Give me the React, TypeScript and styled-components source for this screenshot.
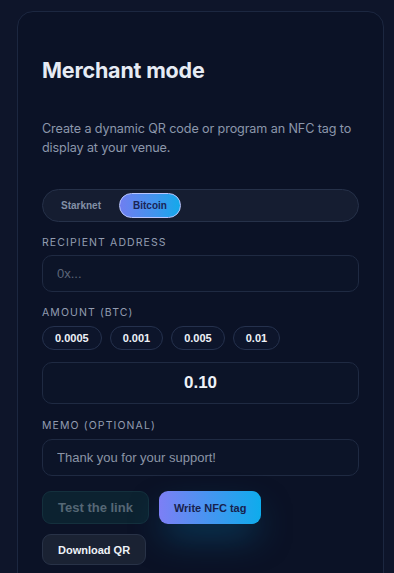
import React, { useState } from "react"
import styled, { createGlobalStyle } from "styled-components"

const GlobalStyle = createGlobalStyle`
  html, body {
    margin: 0;
    padding: 0;
    background: #0e152a;
    font-family: Inter, "Noto Sans", sans-serif;
    -webkit-font-smoothing: antialiased;
  }
`

const Page = styled.div`
  height: 573px;
  padding: 11px 10px 0 17px;
  box-sizing: border-box;
  overflow: hidden;
`

const Card = styled.section`
  width: 367px;
  box-sizing: border-box;
  background: #0b1226;
  border: 1px solid #1c2740;
  border-radius: 16px;
  padding: 44px 24px 40px;
  display: flex;
  flex-direction: column;
`

const Title = styled.h1`
  margin: 0;
  font-size: 21.5px;
  line-height: 28px;
  font-weight: 700;
  color: #e6ebf4;
  letter-spacing: -0.2px;
`

const Intro = styled.p`
  margin: 35px 0 0;
  font-size: 12.6px;
  line-height: 19px;
  letter-spacing: -0.1px;
  color: #8c97ab;
`

const Toggle = styled.div`
  margin-top: 32px;
  height: 33px;
  box-sizing: border-box;
  border: 1px solid #263149;
  background: #151d31;
  border-radius: 999px;
  display: flex;
  align-items: center;
  padding: 0 4px;
  gap: 4px;
`

const ToggleOption = styled.button<{ $active?: boolean }>`
  font-family: "Liberation Sans", Arial, sans-serif;
  font-size: 10px;
  font-weight: 700;
  height: 25px;
  padding: 0 13px;
  border-radius: 999px;
  cursor: pointer;
  white-space: nowrap;
  border: ${(p) => (p.$active ? "1px solid #b8c6ff" : "1px solid transparent")};
  color: ${(p) => (p.$active ? "#1a2456" : "#8390a6")};
  background: ${(p) =>
    p.$active ? "linear-gradient(90deg, #6f7ef0 0%, #3f95ee 60%, #13a9ea 100%)" : "transparent"};
`

const Label = styled.div<{ $gap?: number }>`
  margin-top: ${(p) => p.$gap ?? 14}px;
  font-size: 10.5px;
  line-height: 14px;
  letter-spacing: 1.1px;
  text-transform: uppercase;
  color: #929cb0;
  font-weight: 400;
`

const Field = styled.input<{ $big?: boolean; $gap?: number }>`
  margin-top: ${(p) => p.$gap ?? 5}px;
  height: ${(p) => (p.$big ? 42 : 37)}px;
  width: 100%;
  box-sizing: border-box;
  background: #0c1428;
  border: 1px solid #1f2a42;
  border-radius: 10px;
  padding: 0 14px;
  outline: none;
  font-family: "Liberation Sans", Arial, sans-serif;
  font-size: ${(p) => (p.$big ? 17 : 13)}px;
  font-weight: ${(p) => (p.$big ? 700 : 400)};
  text-align: ${(p) => (p.$big ? "center" : "left")};
  color: ${(p) => (p.$big ? "#eef2f8" : "#8b94a6")};
  &::placeholder {
    color: #5d6679;
  }
`

const Chips = styled.div`
  margin-top: 6px;
  display: flex;
  gap: 8px;
`

const Chip = styled.button`
  height: 24px;
  box-sizing: border-box;
  padding: 0 12px;
  border-radius: 999px;
  border: 1px solid #25314d;
  background: #0d152b;
  color: #eef2f8;
  font-family: "Liberation Sans", Arial, sans-serif;
  font-size: 11px;
  font-weight: 700;
  white-space: nowrap;
  cursor: pointer;
`

const Actions = styled.div`
  margin-top: 15px;
  display: flex;
  flex-wrap: wrap;
  gap: 10px;
  width: 240px;
`

type Variant = "ghost" | "primary" | "plain"

const variantStyles: Record<Variant, string> = {
  ghost: `
    height: 33px;
    padding: 0 15px;
    font-size: 13px;
    background: #0c2230;
    border: 1px solid #14303d;
    color: #556775;
  `,
  primary: `
    height: 33px;
    padding: 0 15px;
    font-size: 11px;
    background: linear-gradient(90deg, #7d7ff5 0%, #3f98f0 55%, #0eacec 100%);
    border: none;
    color: #17214d;
    box-shadow: 0 16px 34px -6px rgba(8, 120, 170, 0.5);
  `,
  plain: `
    height: 31px;
    padding: 0 15px;
    font-size: 11px;
    background: #1a2233;
    border: 1px solid #283247;
    color: #eef2f8;
  `,
}

const ActionButton = styled.button<{ $variant: Variant }>`
  box-sizing: border-box;
  border-radius: 9px;
  font-family: "Liberation Sans", Arial, sans-serif;
  font-weight: 700;
  white-space: nowrap;
  cursor: pointer;
  ${(p) => variantStyles[p.$variant]}
`

const amounts = ["0.0005", "0.001", "0.005", "0.01"]

export default function App() {
  const [network, setNetwork] = useState("Bitcoin")
  const [amount, setAmount] = useState("0.10")

  return (
    <>
      <GlobalStyle />
      <Page>
        <Card>
          <Title>Merchant mode</Title>
          <Intro>
            Create a dynamic QR code or program an NFC tag to display at your venue.
          </Intro>

          <Toggle>
            {["Starknet", "Bitcoin"].map((n) => (
              <ToggleOption key={n} $active={network === n} onClick={() => setNetwork(n)}>
                {n}
              </ToggleOption>
            ))}
          </Toggle>

          <Label>Recipient address</Label>
          <Field placeholder="0x..." />

          <Label>Amount (BTC)</Label>
          <Chips>
            {amounts.map((a) => (
              <Chip key={a} onClick={() => setAmount(a)}>
                {a}
              </Chip>
            ))}
          </Chips>
          <Field
            $big
            $gap={12}
            value={amount}
            onChange={(e) => setAmount(e.target.value)}
          />

          <Label $gap={15}>Memo (optional)</Label>
          <Field $gap={6} defaultValue="Thank you for your support!" />

          <Actions>
            <ActionButton $variant="ghost">Test the link</ActionButton>
            <ActionButton $variant="primary">Write NFC tag</ActionButton>
            <ActionButton $variant="plain">Download QR</ActionButton>
          </Actions>
        </Card>
      </Page>
    </>
  )
}
